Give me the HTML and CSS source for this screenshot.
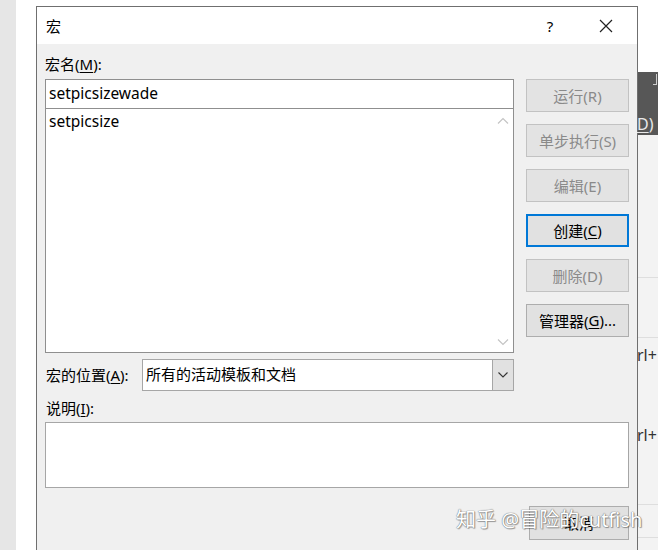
FILE: index.html
```html
<!DOCTYPE html>
<html>
<head>
<meta charset="utf-8">
<link rel="stylesheet" href="styles.css">
</head>
<body>
<div class="desk">
  <div class="strip"></div>
  <div class="gap"></div>
  <div class="dialog">
    <div class="titlebar">
      <span class="title">宏</span>
      <span class="help">?</span>
      <span class="close"><svg width="14" height="14" viewBox="0 0 14 14"><path d="M1 1L13 13M13 1L1 13" stroke="#222" stroke-width="1.2" fill="none"/></svg></span>
    </div>
    <div class="content">
      <div class="main">
        <div class="left">
          <div class="label">宏名(<u>M</u>):</div>
          <div class="input">setpicsizewade</div>
          <div class="list">
            <div class="items"><div class="item">setpicsize</div></div>
            <div class="scroll">
              <svg width="12" height="8" viewBox="0 0 12 8"><path d="M1 6.5L6 1.5L11 6.5" stroke="#c4c4c4" stroke-width="1.2" fill="none"/></svg>
              <svg width="12" height="8" viewBox="0 0 12 8"><path d="M1 1.5L6 6.5L11 1.5" stroke="#c4c4c4" stroke-width="1.2" fill="none"/></svg>
            </div>
          </div>
        </div>
        <div class="buttons">
          <div class="btn disabled">运行(R)</div>
          <div class="btn disabled">单步执行(S)</div>
          <div class="btn disabled">编辑(E)</div>
          <div class="btn focus">创建(<u>C</u>)</div>
          <div class="btn disabled">删除(D)</div>
          <div class="btn">管理器(<u>G</u>)...</div>
        </div>
      </div>
      <div class="loc-row">
        <span class="label loc-label">宏的位置(<u>A</u>):</span>
        <div class="select">
          <span class="select-text">所有的活动模板和文档</span>
          <span class="drop"><svg width="12" height="8" viewBox="0 0 12 8"><path d="M1.5 1.5L6 6L10.5 1.5" stroke="#333" stroke-width="1.1" fill="none"/></svg></span>
        </div>
      </div>
      <div class="label desc-label">说明(<u>I</u>):</div>
      <div class="desc"></div>
      <div class="footer"><div class="btn cancel">取消</div></div>
    </div>
  </div>
  <div class="side">
    <div class="side-top"></div>
    <div class="side-dark">
      <span class="corner"></span>
      <span class="dtext"><u>D</u>)</span>
    </div>
    <div class="side-light">
      <div class="sblock s1"></div>
      <div class="sblock s2"></div>
      <div class="sblock s3"><span class="rl">rl+</span><span class="rl">rl+</span></div>
      <div class="sblock s5"></div>
    </div>
  </div>
</div>
<div class="watermark">知乎 @冒险的cutfish</div>
</body>
</html>
```

FILE: styles.css
```css
* { box-sizing: border-box; }
html, body { margin: 0; padding: 0; }
body {
  width: 658px;
  height: 550px;
  overflow: hidden;
  background: #fff;
  font-family: "Noto Sans", "Noto Sans CJK SC", sans-serif;
  font-size: 15px;
  color: #000;
  position: relative;
}
u { text-decoration: underline; text-underline-offset: 2px; text-decoration-thickness: 1px; }
.desk { display: flex; height: 550px; }
.strip { width: 16px; background: #e6e6e6; }
.gap { width: 20px; background: #fff; }
.dialog {
  width: 602px;
  margin-top: 6px;
  border: 1px solid #6f6f6f;
  border-bottom: none;
  background: #f0f0f0;
  display: flex;
  flex-direction: column;
}
.titlebar {
  height: 37px;
  background: #fff;
  display: flex;
  align-items: center;
  padding-left: 9px;
}
.title { flex: 1; line-height: 20px; }
.help { width: 20px; margin-right: 39px; text-align: center; font-size: 15px; }
.close { width: 14px; height: 14px; margin-right: 24px; display: flex; }
.content { padding: 10px 8px 0 8px; display: flex; flex-direction: column; }
.label { line-height: 20px; height: 20px; white-space: nowrap; }
.main { display: flex; gap: 12px; }
.left { width: 469px; display: flex; flex-direction: column; }
.input {
  margin-top: 5px;
  height: 30px;
  border: 1px solid #8f8f8f;
  background: #fff;
  padding-left: 3px;
  line-height: 26px;
  font-size: 15.5px;
}
.list {
  height: 244px;
  border: 1px solid #8f8f8f;
  border-top: none;
  background: #fff;
  display: flex;
}
.items { flex: 1; padding: 2px 0 0 3px; }
.item { line-height: 20px; font-size: 15.5px; }
.scroll {
  width: 20px;
  display: flex;
  flex-direction: column;
  justify-content: space-between;
  align-items: center;
  padding: 8px 0 6px;
}
.buttons {
  width: 103px;
  margin-top: 25px;
  display: flex;
  flex-direction: column;
  gap: 12px;
}
.btn {
  height: 33px;
  border: 1px solid #adadad;
  background: #e1e1e1;
  display: flex;
  align-items: center;
  justify-content: center;
  white-space: nowrap;
  font-size: 15px;
  padding-bottom: 1px;
}
.btn.disabled { color: #8a8a8a; border-color: #c2c2c2; background: #e3e3e3; }
.btn.focus { border: 2px solid #0078d7; }
.loc-row { display: flex; align-items: center; margin-top: 6px; }
.loc-label { width: 97px; padding-left: 1px; }
.select {
  width: 372px;
  height: 32px;
  border: 1px solid #a6a6a6;
  background: #fff;
  display: flex;
  align-items: stretch;
}
.select-text { flex: 1; padding-left: 3px; line-height: 29px; font-size: 15px; }
.drop {
  width: 21px;
  background: #e1e1e1;
  border-left: 1px solid #a6a6a6;
  display: flex;
  align-items: center;
  justify-content: center;
}
.desc-label { margin-top: 7px; padding-left: 1px; }
.desc {
  margin-top: 4px;
  height: 66px;
  border: 1px solid #a6a6a6;
  background: #fff;
}
.footer { display: flex; justify-content: flex-end; margin-top: 18px; }
.btn.cancel { width: 100px; height: 34px; }
.side { width: 20px; display: flex; flex-direction: column; }
.side-top { height: 72px; background: #fff; }
.side-dark {
  height: 63px;
  background: #575757;
  position: relative;
  display: flex;
  flex-direction: column;
  justify-content: flex-end;
}
.corner {
  position: absolute;
  right: 1px;
  top: 2px;
  width: 4px;
  height: 11px;
  border-right: 1px solid #cfcfcf;
  border-bottom: 1px solid #cfcfcf;
}
.dtext { color: #e8e8e8; font-size: 16px; line-height: 22px; margin-left: -1px; }
.side-light { flex: 1; background: #f3f3f3; display: flex; flex-direction: column; }
.sblock { border-bottom: 1px solid #dedede; }
.s1 { height: 143px; }
.s2 { height: 60px; }
.s3 { height: 167px; padding-top: 6px; }
.s5 { height: 33px; }
.rl { display: block; font-size: 16px; line-height: 22px; color: #333; margin-left: -1px; }
.s3 .rl + .rl { margin-top: 58px; }
.watermark {
  position: absolute;
  left: 456px;
  top: 506px;
  font-size: 20px;
  line-height: 28px;
  color: #fff;
  white-space: nowrap;
  text-shadow: 0 0 1px #777, 0 0 1px #777, 1px 1px 1px rgba(0,0,0,0.35);
}
```
